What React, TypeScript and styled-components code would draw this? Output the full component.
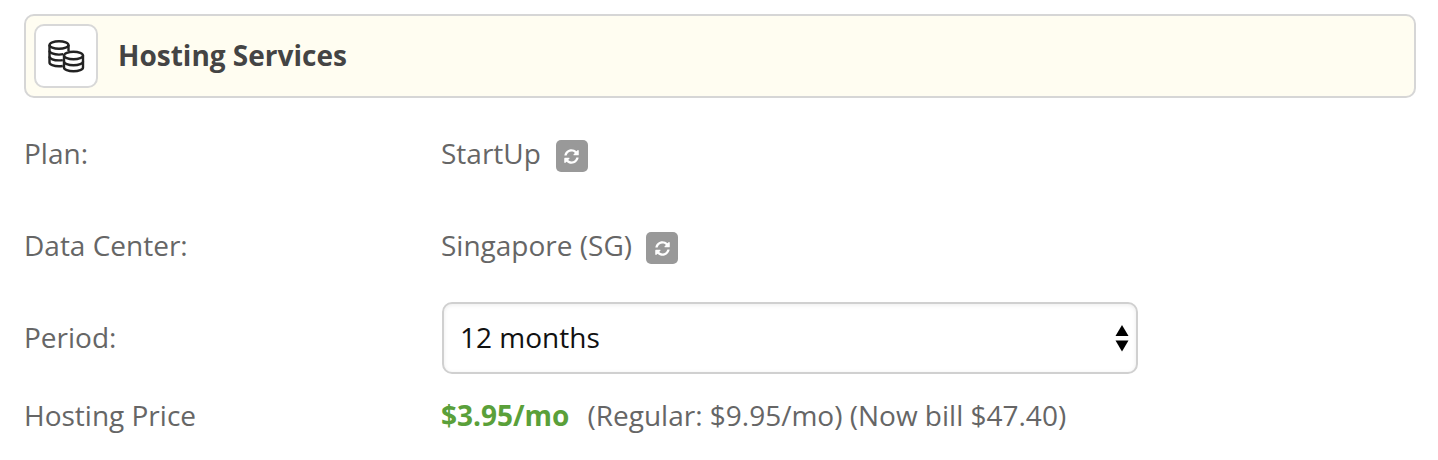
import styled, { createGlobalStyle } from "styled-components";
import { FaSyncAlt } from "react-icons/fa";

const GlobalStyle = createGlobalStyle`
	html, body {
		margin: 0;
		padding: 0;
		background: #fff;
		font-family: "Open Sans", "Liberation Sans", sans-serif;
	}
`;

const Page = styled.div`
	width: 1438px;
	height: 460px;
	box-sizing: border-box;
	padding: 14px 22px 0 24px;
	overflow: hidden;
`;

const Header = styled.div`
	height: 84px;
	box-sizing: border-box;
	display: flex;
	align-items: center;
	gap: 20px;
	padding-left: 8px;
	background: #fffdf1;
	border: 2px solid #d6d6d6;
	border-radius: 10px;
`;

const IconBox = styled.div`
	width: 64px;
	height: 64px;
	box-sizing: border-box;
	display: flex;
	align-items: center;
	justify-content: center;
	background: #fff;
	border: 2px solid #d8d8d8;
	border-radius: 10px;
`;

const Title = styled.h2`
	margin: 0 0 3px;
	font-size: 28px;
	font-weight: 700;
	color: #444;
`;

const Rows = styled.div`
	display: flex;
	flex-direction: column;
	padding-top: 10px;
`;

const Row = styled.div<{ $height: number }>`
	display: grid;
	grid-template-columns: 418px 696px;
	align-items: center;
	height: ${(p) => p.$height}px;
	font-size: 28px;
	color: #666;
`;

const Label = styled.span`
	margin-top: -2px;
`;

const Value = styled.div`
	display: flex;
	align-items: center;
	margin: -2px 0 0 -1px;
`;

const SwapButton = styled.button<{ $gap: number }>`
	width: 32px;
	height: 32px;
	margin: 6px 0 0 ${(p) => p.$gap}px;
	padding: 0;
	display: flex;
	align-items: center;
	justify-content: center;
	background: #999;
	color: #fff;
	border: 0;
	border-radius: 5px;
	font-size: 15px;
`;

const SelectWrap = styled.div`
	position: relative;
	width: 696px;
	height: 72px;
`;

const Select = styled.select`
	width: 100%;
	height: 100%;
	box-sizing: border-box;
	padding: 0 16px 2px;
	appearance: none;
	background: #fff;
	border: 2px solid #d0d0d0;
	border-radius: 10px;
	box-shadow: inset 0 1px 4px rgba(0, 0, 0, 0.08);
	font-family: inherit;
	font-size: 28px;
	color: #111;
`;

const Arrows = styled.svg`
	position: absolute;
	top: 23px;
	right: 9px;
	pointer-events: none;
`;

const Price = styled.strong`
	color: #5aa03a;
	font-weight: 700;
	margin-right: 18px;
`;

const CoinsIcon = () => (
	<svg width="38" height="33" viewBox="0 0 38 33" fill="none" stroke="#222" strokeWidth="2.4">
		<ellipse cx="12" cy="5" rx="9.5" ry="3.8" />
		<path d="M2.5 5v17.500c0 2.100 4.200 3.800 9.500 3.800 1.300 0 2.600-.1 3.800-.3" />
		<path d="M2.500 10.800c0 2.100 4.200 3.800 9.500 3.800 1.500 0 3-.1 4.300-.4" />
		<path d="M2.500 16.600c0 2.100 4.200 3.800 9.500 3.800 1.300 0 2.600-.1 3.800-.3" />
		<path d="M21.500 5v6" />
		<ellipse cx="26.500" cy="15.500" rx="9.500" ry="3.800" fill="#fff" />
		<path d="M17 15.500v12c0 2.100 4.200 3.800 9.500 3.800s9.500-1.700 9.500-3.800v-12" />
		<path d="M17 21.500c0 2.100 4.200 3.800 9.500 3.800s9.500-1.700 9.500-3.800" />
	</svg>
);

export default function App() {
	return (
		<Page>
			<GlobalStyle />
			<Header>
				<IconBox>
					<CoinsIcon />
				</IconBox>
				<Title>Hosting Services</Title>
			</Header>
			<Rows>
				<Row $height={92}>
					<Label>Plan:</Label>
					<Value>
						StartUp
						<SwapButton $gap={15}>
							<FaSyncAlt />
						</SwapButton>
					</Value>
				</Row>
				<Row $height={92}>
					<Label>Data Center:</Label>
					<Value>
						Singapore (SG)
						<SwapButton $gap={14}>
							<FaSyncAlt />
						</SwapButton>
					</Value>
				</Row>
				<Row $height={92}>
					<Label>Period:</Label>
					<SelectWrap>
						<Select defaultValue="12">
							<option value="12">12 months</option>
						</Select>
						<Arrows width="14" height="27" viewBox="0 0 14 27" fill="#000">
							<path d="M7 0l6.500 11H.5z" />
							<path d="M.5 15.500h13L7 26.500z" />
						</Arrows>
					</SelectWrap>
				</Row>
				<Row $height={64}>
					<Label>Hosting Price</Label>
					<Value>
						<Price>$3.95/mo</Price>
						(Regular: $9.95/mo) (Now bill $47.40)
					</Value>
				</Row>
			</Rows>
		</Page>
	);
}
